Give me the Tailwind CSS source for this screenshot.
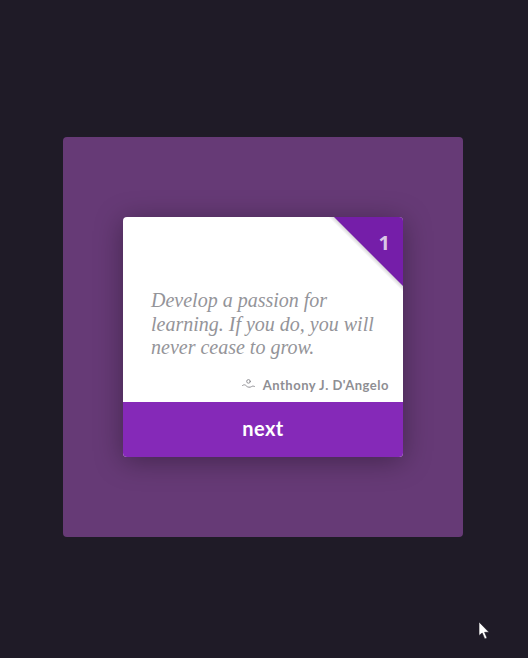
<!DOCTYPE html>
<html lang="en">
<head>
    <meta charset="UTF-8">
    <meta name="viewport" content="width=device-width, initial-scale=1.0">
    <title>Quote card</title>
    <script src="https://cdn.jsdelivr.net/npm/@tailwindcss/browser@4"></script>
</head>
<body class="relative h-[658px] overflow-hidden bg-[#1f1b27]">
    <div class="pt-[137px] pl-[63px]">
        <div class="flex items-center justify-center w-[400px] h-[400px] rounded bg-[#663a76]">
            <div class="relative flex flex-col w-[280px] h-[240px] rounded overflow-hidden bg-white shadow-[0_4px_28px_rgba(0,0,0,0.35)]">
                <!-- folded corner -->
                <svg class="absolute top-0 right-0" width="75" height="75" viewBox="0 0 75 75">
                    <defs>
                        <linearGradient id="fold" x1="0" y1="1" x2="1" y2="0">
                            <stop offset="0.5" stop-color="#000" stop-opacity="0"/>
                            <stop offset="0.54" stop-color="#000" stop-opacity="0.16"/>
                        </linearGradient>
                    </defs>
                    <polygon points="0,0 75,0 75,75" fill="url(#fold)"/>
                    <polygon points="6,0 75,0 75,69" fill="#751ea9"/>
                </svg>
                <span class="absolute top-[14px] right-[13px] text-[#d9c6e6] text-[20px] leading-[24px] font-bold font-['Open_Sans',sans-serif]">1</span>

                <div class="flex-1 flex flex-col pt-[72px] pl-[28px] pr-[14px]">
                    <p class="text-[#949499] text-[20px] leading-[23.5px] italic font-['Liberation_Serif',cursive] pr-[10px]">Develop a passion for learning. If you do, you will never cease to grow.</p>
                    <div class="flex items-center justify-end gap-[8px] mt-[16px]">
                        <svg width="13" height="11" viewBox="0 0 13 11" fill="none" stroke="#8e8e93" stroke-width="1" stroke-linecap="round">
                            <circle cx="6.5" cy="2.4" r="1.8"/>
                            <path d="M0.6 6.4 C2 5.4 3.2 5.6 4.4 7 C5.6 8.4 8 8.6 9.5 7.6 C10.4 7 11.2 7 12.4 7.4"/>
                        </svg>
                        <span class="text-[#8e8e93] text-[13px] leading-[18px] font-bold tracking-[0.5px] font-['Lato',sans-serif]">Anthony J. D'Angelo</span>
                    </div>
                </div>

                <div class="flex items-center justify-center h-[55px] pb-[3px] bg-[#8529b8] text-white text-[20px] font-bold tracking-[0.4px] font-['Lato',sans-serif]">next</div>
            </div>
        </div>
    </div>

    <!-- mouse pointer -->
    <svg class="absolute left-[478px] top-[621px]" width="13" height="19" viewBox="0 0 13 19">
        <path d="M1 1 L1 14.5 L4.2 12 L6.8 18 L9 17 L6.6 11.3 L11 11.3 Z" fill="#fff" stroke="#1f1b27" stroke-width="0.6"/>
    </svg>
</body>
</html>
